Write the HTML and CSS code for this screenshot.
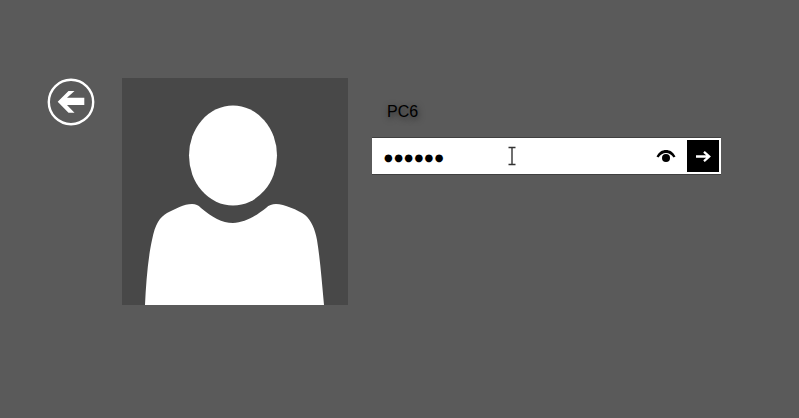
FILE: index.html
```html
<!DOCTYPE html>
<html lang="en">
<head>
  <meta charset="UTF-8" />
  <title>Sign in</title>
  <link rel="stylesheet" href="styles.css">
</head>
<body>
  <div class="login">
    <button class="back" aria-label="Back">
      <svg width="48" height="48" viewBox="0 0 48 48">
        <circle cx="24" cy="24" r="22.2" fill="none" stroke="#fff" stroke-width="2.4" />
        <path d="M21.5 13 L10.7 23.8 L21.5 34.7 H27.5 L20 27 H37.3 V19.8 H20 L27.5 13 Z" fill="#fff" />
      </svg>
    </button>

    <div class="avatar">
      <svg width="226" height="227" viewBox="0 0 226 227">
        <ellipse cx="111" cy="77.5" rx="44" ry="50" fill="#fff" />
        <path d="M23 227 C24 205 26 180 30 162 C33 146 38 139 45 135 C53 131 62 126 70 126 C74 126 76 127 79 130 C90 139 100 145 111 145 C122 145 134 138 144 130 C147 127 150 126 154 126 C162 126 176 132 183 137 C189 142 193 151 195 162 C198 180 200 205 202 227 Z" fill="#fff" />
      </svg>
    </div>

    <div class="account">
      <p class="account-name">PC6</p>
      <div class="password">
        <span class="dots">●●●●●●</span>
        <svg class="caret" width="10" height="20" viewBox="0 0 10 20">
          <path d="M1.5 1.5 H8.5 M1.5 18.5 H8.5 M5 1.5 V18.5" fill="none" stroke="#333" stroke-width="1.4" />
        </svg>
        <svg class="eye" width="20" height="14" viewBox="0 0 20 14">
          <path d="M0.5 7.5 C3 3 6 1 10 1 C14 1 17 3 19.5 7.5 L17.5 8.5 C15.5 5.5 13 4 10 4 C7 4 4.5 5.5 2.5 8.5 Z" fill="#000" />
          <circle cx="10" cy="9" r="4" fill="#000" />
        </svg>
        <button class="submit" aria-label="Submit">
          <svg width="15" height="11" viewBox="0 0 15 11">
            <path d="M0 5.5 H13 M8 0.8 L13.2 5.5 L8 10.2" fill="none" stroke="#fff" stroke-width="2.3" />
          </svg>
        </button>
      </div>
    </div>
  </div>
</body>
</html>
```

FILE: styles.css
```css
* {
  box-sizing: border-box;
  padding: 0;
  margin: 0;
}

body {
  background: #5a5a5a;
  min-height: 100vh;
  font-family: "Liberation Sans", Arial, sans-serif;
  overflow: hidden;
}

.login {
  display: flex;
  align-items: flex-start;
  padding: 78px 0 0 47px;
}

.back {
  width: 48px;
  height: 48px;
  background: none;
  border: none;
  display: flex;
}

.avatar {
  width: 226px;
  height: 227px;
  margin-left: 27px;
  background: #484848;
  display: flex;
}

.account {
  margin-left: 24px;
  width: 349px;
}

.account-name {
  margin: 25px 0 17px 15px;
  font-size: 16px;
  line-height: 18px;
  color: #000;
  text-shadow: 1px 2px 6px rgba(0, 0, 0, 0.6);
}

.password {
  position: relative;
  height: 36px;
  background: #fff;
  box-shadow: 0 -1px 0 #404040, 0 1px 0 #404040;
  display: flex;
  align-items: center;
  padding: 2px 2px 2px 12px;
}

.dots {
  flex: 1;
  padding-top: 2px;
  font-family: "DejaVu Sans", sans-serif;
  font-size: 10px;
  letter-spacing: 1.4px;
  color: #000;
}

.caret {
  position: absolute;
  left: 135px;
  top: 8px;
}

.eye {
  margin-right: 11px;
}

.submit {
  width: 32px;
  height: 32px;
  background: #000;
  border: none;
  display: flex;
  align-items: center;
  justify-content: center;
}
```
